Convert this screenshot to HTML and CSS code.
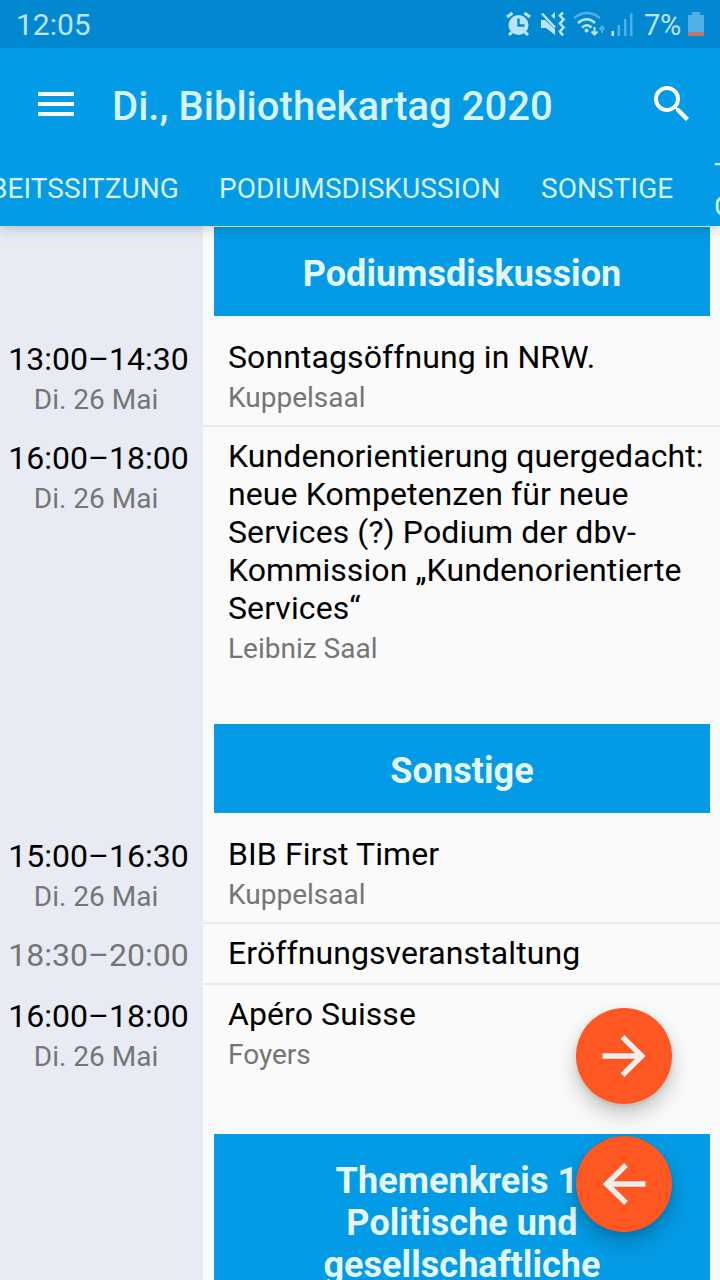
FILE: index.html
```html
<!DOCTYPE html>
<html lang="de">
<head>
<meta charset="utf-8">
<title>Di., Bibliothekartag 2020</title>
<link rel="stylesheet" href="styles.css">
</head>
<body>
<div class="screen">
  <header class="top">
    <div class="status">
      <span class="clock">12:05</span>
      <svg class="status-icons" width="140" height="48" viewBox="0 0 140 48">
        <g fill="#bce4f8" stroke="#bce4f8">
          <circle cx="18.500" cy="25" r="10" stroke="none"/>
          <path d="M7 17l5.500-4M24.500 13l5.500 4M12 32l-3 3M25 32l3 3" fill="none" stroke-width="3"/>
          <path d="M18.500 18.500v7h6" fill="none" stroke="#0288d1" stroke-width="2.400"/>
          <path d="M41 20h4l10 9.500V35l-9-7h-5zM51 16l4-4v7z" stroke="none"/>
          <path d="M42 13.500l13 14" fill="none" stroke-width="2.400"/>
          <path d="M63 12.500l-3 3 3.500 4-3.500 4 3.500 4-3.500 4 3 4" fill="none" stroke-width="2.600"/>
          <path d="M78 23q9-7.500 17 0M82 27.500q5-4.500 9.500 0" fill="none" stroke-width="2.600"/>
          <circle cx="86.500" cy="30.500" r="2" stroke="none"/>
          <path d="M94.500 27v7M91.500 31.500l3 3 3-3" fill="none" stroke-width="2"/>
          <path d="M111.500 31h2.500v5h-2.500z" stroke="none"/>
        </g>
        <g fill="#4eb0e3" stroke="#4eb0e3">
          <path d="M74 18q13-10 26 0" fill="none" stroke-width="2.600"/>
          <path d="M102 33v-6M99.500 29.500l2.500-3 2.500 3" fill="none" stroke-width="2"/>
          <path d="M117.500 25h2.500v11h-2.500zM124 19h2.500v17H124zM130 13.500h2.500V36H130z" stroke="none"/>
        </g>
      </svg>
      <span class="percent">7%</span>
      <svg class="battery" width="16" height="48" viewBox="0 0 16 48">
        <path d="M4 12h8v3h4v17H0V15h4z" fill="#4eb0e3"/>
        <path d="M0 32h16v4H0z" fill="#c1756b"/>
      </svg>
    </div>
    <div class="appbar">
      <svg class="menu" width="36" height="24" viewBox="0 0 36 24"><path d="M0 0h36v4H0zM0 10h36v4H0zM0 20h36v4H0z" fill="#fff"/></svg>
      <h1 class="title">Di., Bibliothekartag 2020</h1>
      <svg class="search" width="48" height="48" viewBox="0 0 24 24"><path fill="#fff" d="M15.500 14h-.79l-.28-.27A6.471 6.471 0 0 0 16 9.500 6.500 6.500 0 1 0 9.500 16c1.610 0 3.090-.59 4.230-1.570l.27.28v.79l5 4.990L20.490 19l-4.990-5zm-6 0C7.010 14 5 11.990 5 9.500S7.010 5 9.500 5 14 7.010 14 9.500 11.990 14 9.500 14z"/></svg>
    </div>
    <nav class="tabs">
      <span class="tab tab-first">ARBEITSSITZUNG</span>
      <span class="tab tab-wide">PODIUMSDISKUSSION</span>
      <span class="tab tab-other">SONSTIGE</span>
      <span class="tab tab-wrap">THEMENKREIS 1<br>GESELLSCHAFT</span>
    </nav>
  </header>

  <main class="list">
    <section class="group group-one">
      <h2 class="heading">Podiumsdiskussion</h2>
      <article class="row">
        <div class="when"><div class="time">13:00–14:30</div><div class="date">Di. 26 Mai</div></div>
        <div class="what"><div class="name">Sonntagsöffnung in NRW.</div><div class="room">Kuppelsaal</div></div>
      </article>
      <article class="row last">
        <div class="when"><div class="time">16:00–18:00</div><div class="date">Di. 26 Mai</div></div>
        <div class="what"><div class="name">Kundenorientierung quergedacht:<br>neue Kompetenzen für neue<br>Services (?) Podium der dbv-<br>Kommission „Kundenorientierte<br>Services“</div><div class="room">Leibniz Saal</div></div>
      </article>
    </section>
    <section class="group group-two">
      <h2 class="heading">Sonstige</h2>
      <article class="row">
        <div class="when"><div class="time">15:00–16:30</div><div class="date">Di. 26 Mai</div></div>
        <div class="what"><div class="name">BIB First Timer</div><div class="room">Kuppelsaal</div></div>
      </article>
      <article class="row">
        <div class="when"><div class="time muted">18:30–20:00</div></div>
        <div class="what"><div class="name">Eröffnungsveranstaltung</div></div>
      </article>
      <article class="row last">
        <div class="when"><div class="time">16:00–18:00</div><div class="date">Di. 26 Mai</div></div>
        <div class="what"><div class="name">Apéro Suisse</div><div class="room">Foyers</div></div>
      </article>
    </section>
    <section class="group">
      <h2 class="heading tall">Themenkreis 1:<br>Politische und<br>gesellschaftliche</h2>
    </section>
  </main>

  <div class="fabs">
    <button class="fab" aria-label="Weiter"><svg width="96" height="96" viewBox="0 0 96 96"><path d="M26.500 48h40M46.500 29L65.800 48 46.500 67" fill="none" stroke="#f2eeee" stroke-width="5.400"/></svg></button>
    <button class="fab" aria-label="Zurück"><svg width="96" height="96" viewBox="0 0 96 96"><path d="M69.500 48h-38M50 29L30.700 48 50 67" fill="none" stroke="#f2eeee" stroke-width="5.400"/></svg></button>
  </div>
</div>
</body>
</html>
```
FILE: styles.css
```css
* { box-sizing: border-box; margin: 0; }
svg { display: block; flex: none; }
body { font-family: Roboto, "Liberation Sans", sans-serif; background: #fafafa; color: #000; }
.screen { position: relative; display: flex; flex-direction: column; width: 720px; height: 1280px; overflow: hidden; }
.top { flex: none; height: 226px; background: #039be5; color: #d5f2fd; box-shadow: 0 2px 12px rgba(0, 0, 0, .22); z-index: 1; }
.status { display: flex; align-items: center; height: 48px; padding: 0 16px; background: #0288d1; color: #bce4f8; font-size: 30px; line-height: 48px; }
.clock { flex: 1; padding-top: 2px; }
.percent { width: 44px; margin-left: 4px; padding-top: 2px; font-size: 29px; letter-spacing: -.3px; white-space: nowrap; }
.appbar { display: flex; align-items: center; height: 112px; padding: 0 24px 0 38px; }
.title { flex: 1; margin-left: 38px; padding-top: 6px; font-size: 40px; font-weight: 500; line-height: 48px; letter-spacing: .02px; white-space: nowrap; }
.tabs { display: flex; align-items: center; height: 58px; padding-bottom: 2px; font-size: 28px; line-height: 33px; letter-spacing: .06px; white-space: nowrap; }
.tab { flex: none; }
.tab-first { display: flex; justify-content: flex-end; width: 179px; }
.tab-wide { margin-left: 40px; width: 282px; }
.tab-other { margin-left: 40px; width: 133px; }
.tab-wrap { margin-left: 40px; padding-top: 3px; }
.list { flex: 1; padding-top: 1px; background: linear-gradient(90deg, #e8ebf4 203px, #fafafa 203px); overflow: hidden; }
.group-one { height: 497px; }
.group-two { height: 410px; }
.heading { height: 89px; margin: 0 10px 12px 214px; padding: 26px 30px; background: #039be5; color: #e5f7fe; font-size: 36px; font-weight: 700; line-height: 42px; letter-spacing: .06px; text-align: center; }
.tall { height: 180px; }
.row { display: grid; grid-template-columns: 203px 1fr; }
.when { padding: 12px 14px 0 8px; text-align: center; white-space: nowrap; }
.what { padding: 10px 0 11px 25px; border-bottom: 2px solid #e8ebf4; white-space: nowrap; }
.last .what { border-bottom: 0; }
.time, .name { font-size: 32px; line-height: 38px; }
.name { letter-spacing: .09px; }
.date, .room { margin-top: 5px; font-size: 28px; line-height: 33px; color: #757575; }
.date { padding-right: 5px; }
.muted { color: #757575; }
.fabs { position: absolute; right: 48px; top: 1008px; display: grid; gap: 32px; z-index: 2; }
.fab { width: 96px; height: 96px; padding: 0; border: 0; border-radius: 50%; background: #ff5722; box-shadow: 0 10px 20px rgba(0, 0, 0, .22), 0 2px 5px rgba(0, 0, 0, .1); }
```
